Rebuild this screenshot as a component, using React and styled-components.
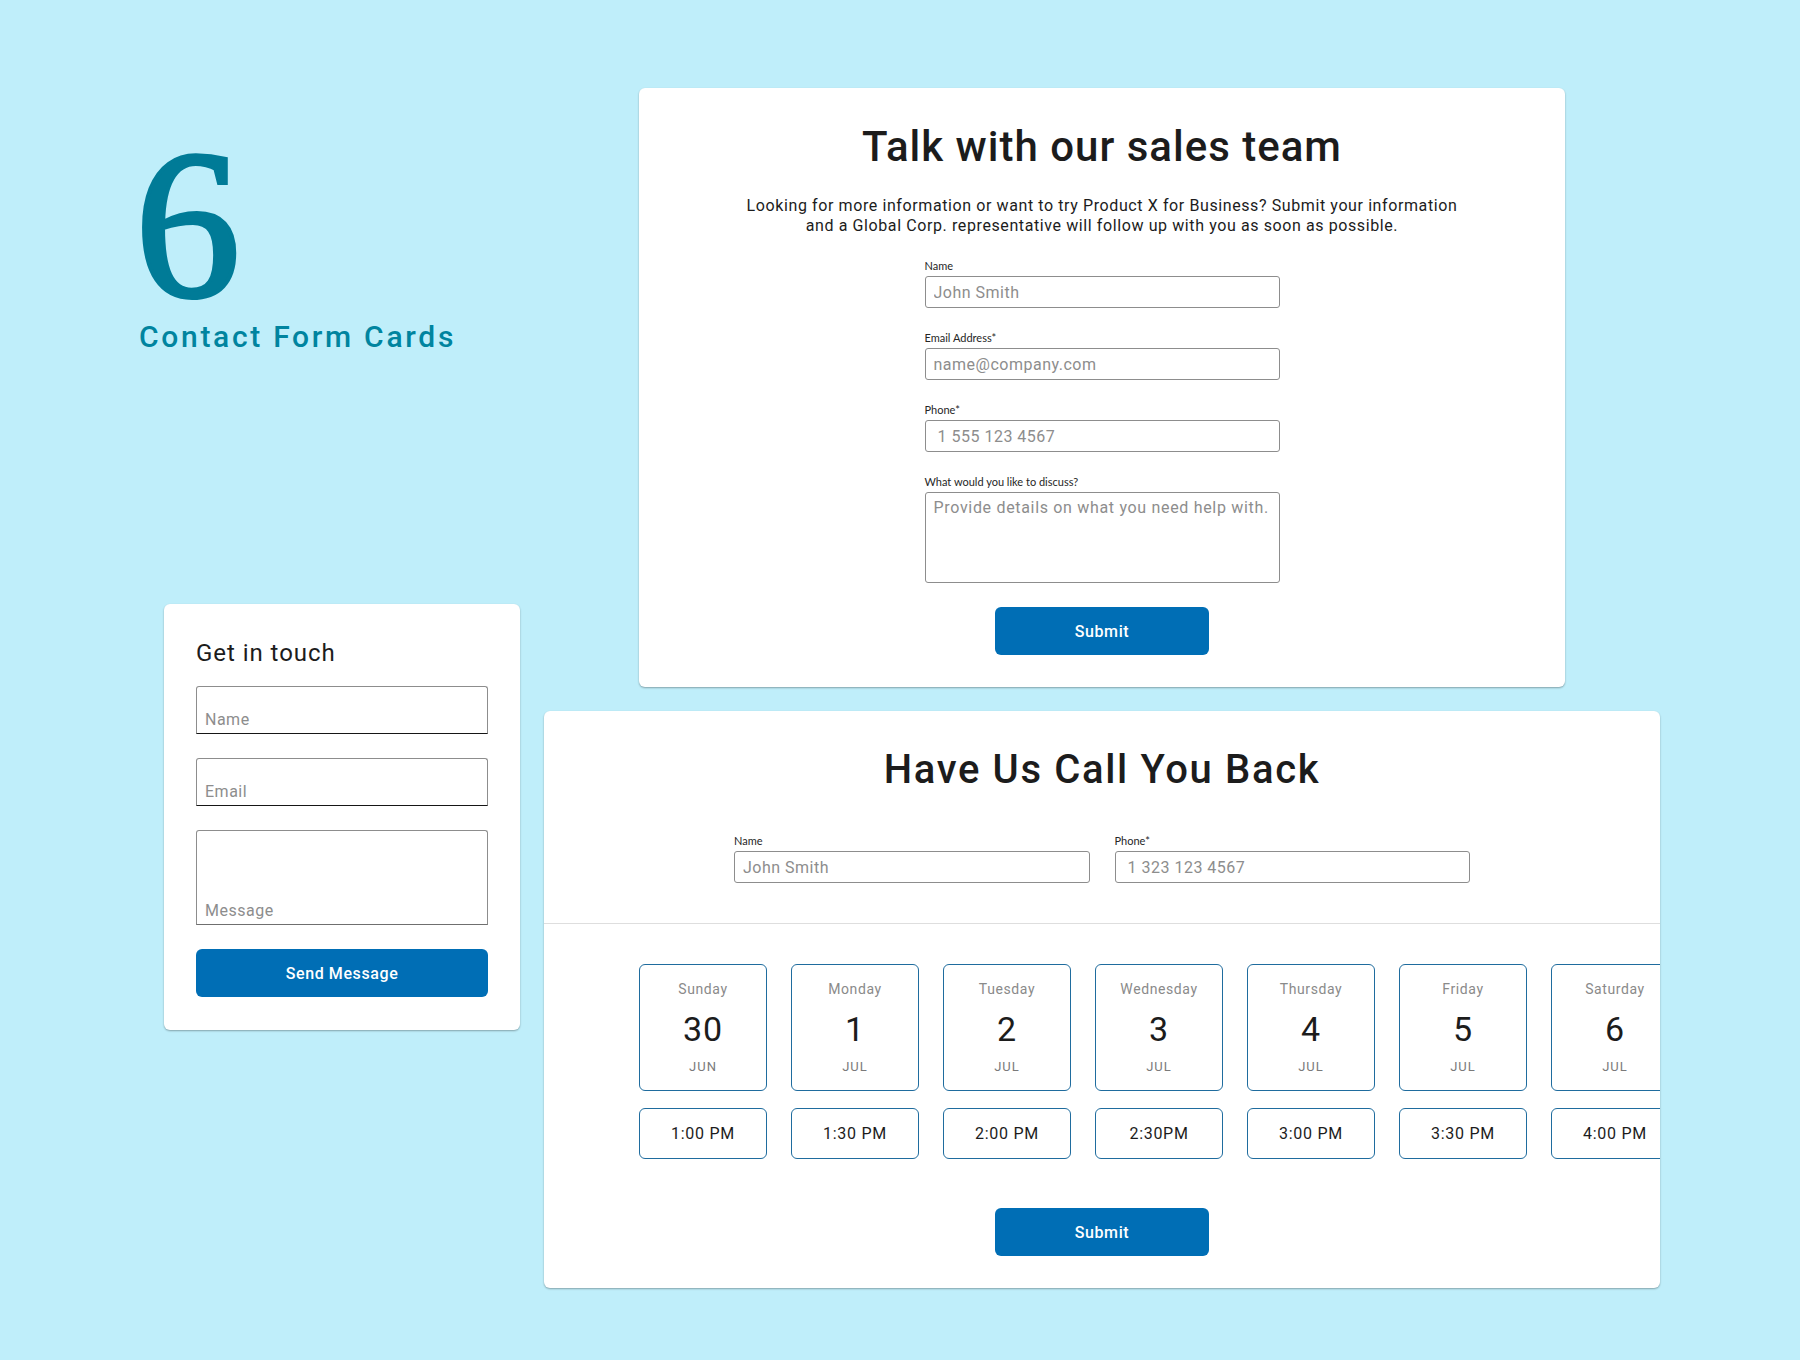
import React from "react";
import styled, { createGlobalStyle } from "styled-components";

const sans = `Roboto, "Noto Sans", Arial, sans-serif`;
const small = `Lato, "Noto Sans", Arial, sans-serif`;
const serif = `"Liberation Serif", "DejaVu Serif", serif`;

const GlobalStyle = createGlobalStyle`
  html, body { margin: 0; padding: 0; }
  body {
    background: #bfeefa;
    font-family: ${sans};
    color: #1c1c1c;
  }
  *, *::before, *::after { box-sizing: border-box; }
`;

const Page = styled.main`
  width: 1800px;
  min-height: 1360px;
  display: flex;
  align-items: flex-start;
  gap: 24px;
  padding: 88px 0 0 139px;
`;

const LeftColumn = styled.div`
  width: 381px;
  flex-shrink: 0;
  display: flex;
  flex-direction: column;
  padding-top: 57px;
`;

const RightColumn = styled.div`
  display: flex;
  flex-direction: column;
  align-items: flex-start;
  gap: 24px;
`;

const Numeral = styled.div`
  font-family: ${serif};
  font-size: 211px;
  line-height: 160px;
  color: #007b97;
  -webkit-text-stroke: 4px #007b97;
  margin-left: -4px;
`;

const Subtitle = styled.h2`
  margin: 14px 0 0;
  font-family: ${sans};
  font-size: 30px;
  line-height: 36px;
  font-weight: 500;
  letter-spacing: 2.7px;
  color: #00849f;
`;

const Card = styled.section`
  background: #ffffff;
  border-radius: 6px;
  box-shadow: 0 1px 2px rgba(0, 0, 0, 0.32);
  overflow: hidden;
`;

/* ---------- Get in touch ---------- */

const TouchCard = styled(Card)`
  width: 356px;
  margin: 249px 0 0 25px;
  padding: 34px 32px 33px;
  display: flex;
  flex-direction: column;
  gap: 24px;
`;

const TouchTitle = styled.h3`
  margin: 0 0 -6px;
  font-size: 24px;
  line-height: 30px;
  font-weight: 400;
  letter-spacing: 0.95px;
  color: #1c1c1c;
`;

const FloatField = styled.label`
  display: flex;
  align-items: flex-end;
  height: ${(p) => p.$h}px;
  border: 1px solid #8d8d8d;
  border-bottom-color: ${(p) => (p.$soft ? "#6f6f6f" : "#161616")};
  border-radius: 3px 3px 0 0;
  padding: 0 8px 3px;
`;

const Hint = styled.span`
  font-size: 16px;
  line-height: 20px;
  letter-spacing: 0.5px;
  color: #8d8d8d;
`;

const PrimaryButton = styled.button`
  display: block;
  width: ${(p) => p.$w || "100%"};
  height: 48px;
  margin: ${(p) => p.$m || "0"};
  border: none;
  border-radius: 6px;
  background: #006eb5;
  color: #ffffff;
  font-family: ${sans};
  font-size: 16px;
  font-weight: 500;
  letter-spacing: 0.6px;
  cursor: pointer;
`;

/* ---------- Sales card ---------- */

const SalesCard = styled(Card)`
  width: 926px;
  margin-left: 95px;
  padding: 34px 0 32px;
  display: flex;
  flex-direction: column;
  align-items: center;
`;

const Heading = styled.h1`
  margin: 0;
  font-size: ${(p) => p.$size}px;
  line-height: ${(p) => p.$lh}px;
  font-weight: 500;
  letter-spacing: ${(p) => p.$track}px;
  color: #1c1c1c;
  text-align: center;
`;

const Lead = styled.p`
  margin: 24px 0 0;
  font-size: 16px;
  line-height: 20px;
  text-align: center;
  letter-spacing: 0.6px;
  color: #1c1c1c;
`;

const FormStack = styled.div`
  width: 355px;
  margin-top: 23px;
  display: flex;
  flex-direction: column;
  gap: 23px;
`;

const Field = styled.label`
  display: flex;
  flex-direction: column;
  gap: 3px;
  flex: ${(p) => (p.$grow ? "1 1 0" : "0 0 auto")};
`;

const FieldLabel = styled.span`
  font-family: ${small};
  font-size: 11px;
  line-height: 14px;
  color: #262626;
`;

const TextInput = styled.input`
  display: block;
  width: 100%;
  height: 32px;
  border: 1px solid #8d8d8d;
  border-radius: 3px;
  padding: 0 ${(p) => p.$inset || 8}px;
  font-family: ${sans};
  font-size: 16px;
  letter-spacing: 0.5px;
  color: #1c1c1c;
  background: #fff;
  outline: none;
  &::placeholder {
    color: #8d8d8d;
  }
`;

const TextArea = styled.textarea`
  display: block;
  width: 100%;
  height: 91px;
  border: 1px solid #8d8d8d;
  border-radius: 3px;
  padding: 5px 8px;
  font-family: ${sans};
  font-size: 16px;
  line-height: 20px;
  letter-spacing: 0.68px;
  resize: none;
  outline: none;
  &::placeholder {
    color: #8d8d8d;
  }
`;

/* ---------- Call back card ---------- */

const CallCard = styled(Card)`
  width: 1116px;
`;

const CallHeader = styled.div`
  display: flex;
  flex-direction: column;
  align-items: center;
  padding: 35px 0 40px;
  border-bottom: 1px solid #dedede;
`;

const FieldRow = styled.div`
  width: 736px;
  margin-top: 40px;
  display: flex;
  gap: 25px;
`;

const Schedule = styled.div`
  padding: 40px 0 32px;
  display: flex;
  flex-direction: column;
  align-items: center;
`;

const SlotRow = styled.div`
  align-self: stretch;
  display: flex;
  flex-wrap: nowrap;
  gap: 24px;
  padding-left: 95px;
`;

const Slot = styled.div`
  flex: 0 0 128px;
  display: flex;
  flex-direction: column;
  gap: 17px;
`;

const Tile = styled.button`
  width: 128px;
  height: ${(p) => p.$h}px;
  border: 1px solid #1f6c9e;
  border-radius: 6px;
  background: #fff;
  padding: 0;
  display: flex;
  flex-direction: column;
  align-items: center;
  justify-content: center;
  font-family: ${sans};
  cursor: pointer;
`;

const DayName = styled.span`
  font-size: 14px;
  line-height: 18px;
  letter-spacing: 0.6px;
  color: #8a8a8a;
`;

const DayNumber = styled.span`
  margin-top: 11px;
  font-size: 34px;
  line-height: 40px;
  letter-spacing: 1px;
  color: #1c1c1c;
`;

const Month = styled.span`
  margin-top: 10px;
  font-size: 13px;
  line-height: 16px;
  letter-spacing: 1px;
  color: #7a7a7a;
`;

const TimeText = styled.span`
  font-size: 16px;
  letter-spacing: 0.7px;
  color: #1c1c1c;
`;

const slots = [
  { day: "Sunday", date: "30", month: "JUN", time: "1:00 PM" },
  { day: "Monday", date: "1", month: "JUL", time: "1:30 PM" },
  { day: "Tuesday", date: "2", month: "JUL", time: "2:00 PM" },
  { day: "Wednesday", date: "3", month: "JUL", time: "2:30PM" },
  { day: "Thursday", date: "4", month: "JUL", time: "3:00 PM" },
  { day: "Friday", date: "5", month: "JUL", time: "3:30 PM" },
  { day: "Saturday", date: "6", month: "JUL", time: "4:00 PM" },
];

export default function App() {
  return (
    <>
      <GlobalStyle />
      <Page>
        <LeftColumn>
          <Numeral>6</Numeral>
          <Subtitle>Contact Form Cards</Subtitle>

          <TouchCard>
            <TouchTitle>Get in touch</TouchTitle>
            <FloatField $h={48}>
              <Hint>Name</Hint>
            </FloatField>
            <FloatField $h={48}>
              <Hint>Email</Hint>
            </FloatField>
            <FloatField $h={95} $soft>
              <Hint>Message</Hint>
            </FloatField>
            <PrimaryButton>Send Message</PrimaryButton>
          </TouchCard>
        </LeftColumn>

        <RightColumn>
          <SalesCard>
            <Heading $size={42} $lh={50} $track={1}>
              Talk with our sales team
            </Heading>
            <Lead>
              Looking for more information or want to try Product X for Business? Submit your information
              <br />
              and a Global Corp. representative will follow up with you as soon as possible.
            </Lead>
            <FormStack>
              <Field>
                <FieldLabel>Name</FieldLabel>
                <TextInput placeholder="John Smith" />
              </Field>
              <Field>
                <FieldLabel>Email Address*</FieldLabel>
                <TextInput placeholder="name@company.com" />
              </Field>
              <Field>
                <FieldLabel>Phone*</FieldLabel>
                <TextInput $inset={12} placeholder="1 555 123 4567" />
              </Field>
              <Field>
                <FieldLabel>What would you like to discuss?</FieldLabel>
                <TextArea placeholder="Provide details on what you need help with." />
              </Field>
            </FormStack>
            <PrimaryButton $w="214px" $m="24px 0 0">
              Submit
            </PrimaryButton>
          </SalesCard>

          <CallCard>
            <CallHeader>
              <Heading $size={40} $lh={48} $track={1.65}>
                Have Us Call You Back
              </Heading>
              <FieldRow>
                <Field $grow>
                  <FieldLabel>Name</FieldLabel>
                  <TextInput placeholder="John Smith" />
                </Field>
                <Field $grow>
                  <FieldLabel>Phone*</FieldLabel>
                  <TextInput $inset={12} placeholder="1 323 123 4567" />
                </Field>
              </FieldRow>
            </CallHeader>
            <Schedule>
              <SlotRow>
                {slots.map((s) => (
                  <Slot key={s.day}>
                    <Tile $h={127}>
                      <DayName>{s.day}</DayName>
                      <DayNumber>{s.date}</DayNumber>
                      <Month>{s.month}</Month>
                    </Tile>
                    <Tile $h={51}>
                      <TimeText>{s.time}</TimeText>
                    </Tile>
                  </Slot>
                ))}
              </SlotRow>
              <PrimaryButton $w="214px" $m="49px 0 0">
                Submit
              </PrimaryButton>
            </Schedule>
          </CallCard>
        </RightColumn>
      </Page>
    </>
  );
}
